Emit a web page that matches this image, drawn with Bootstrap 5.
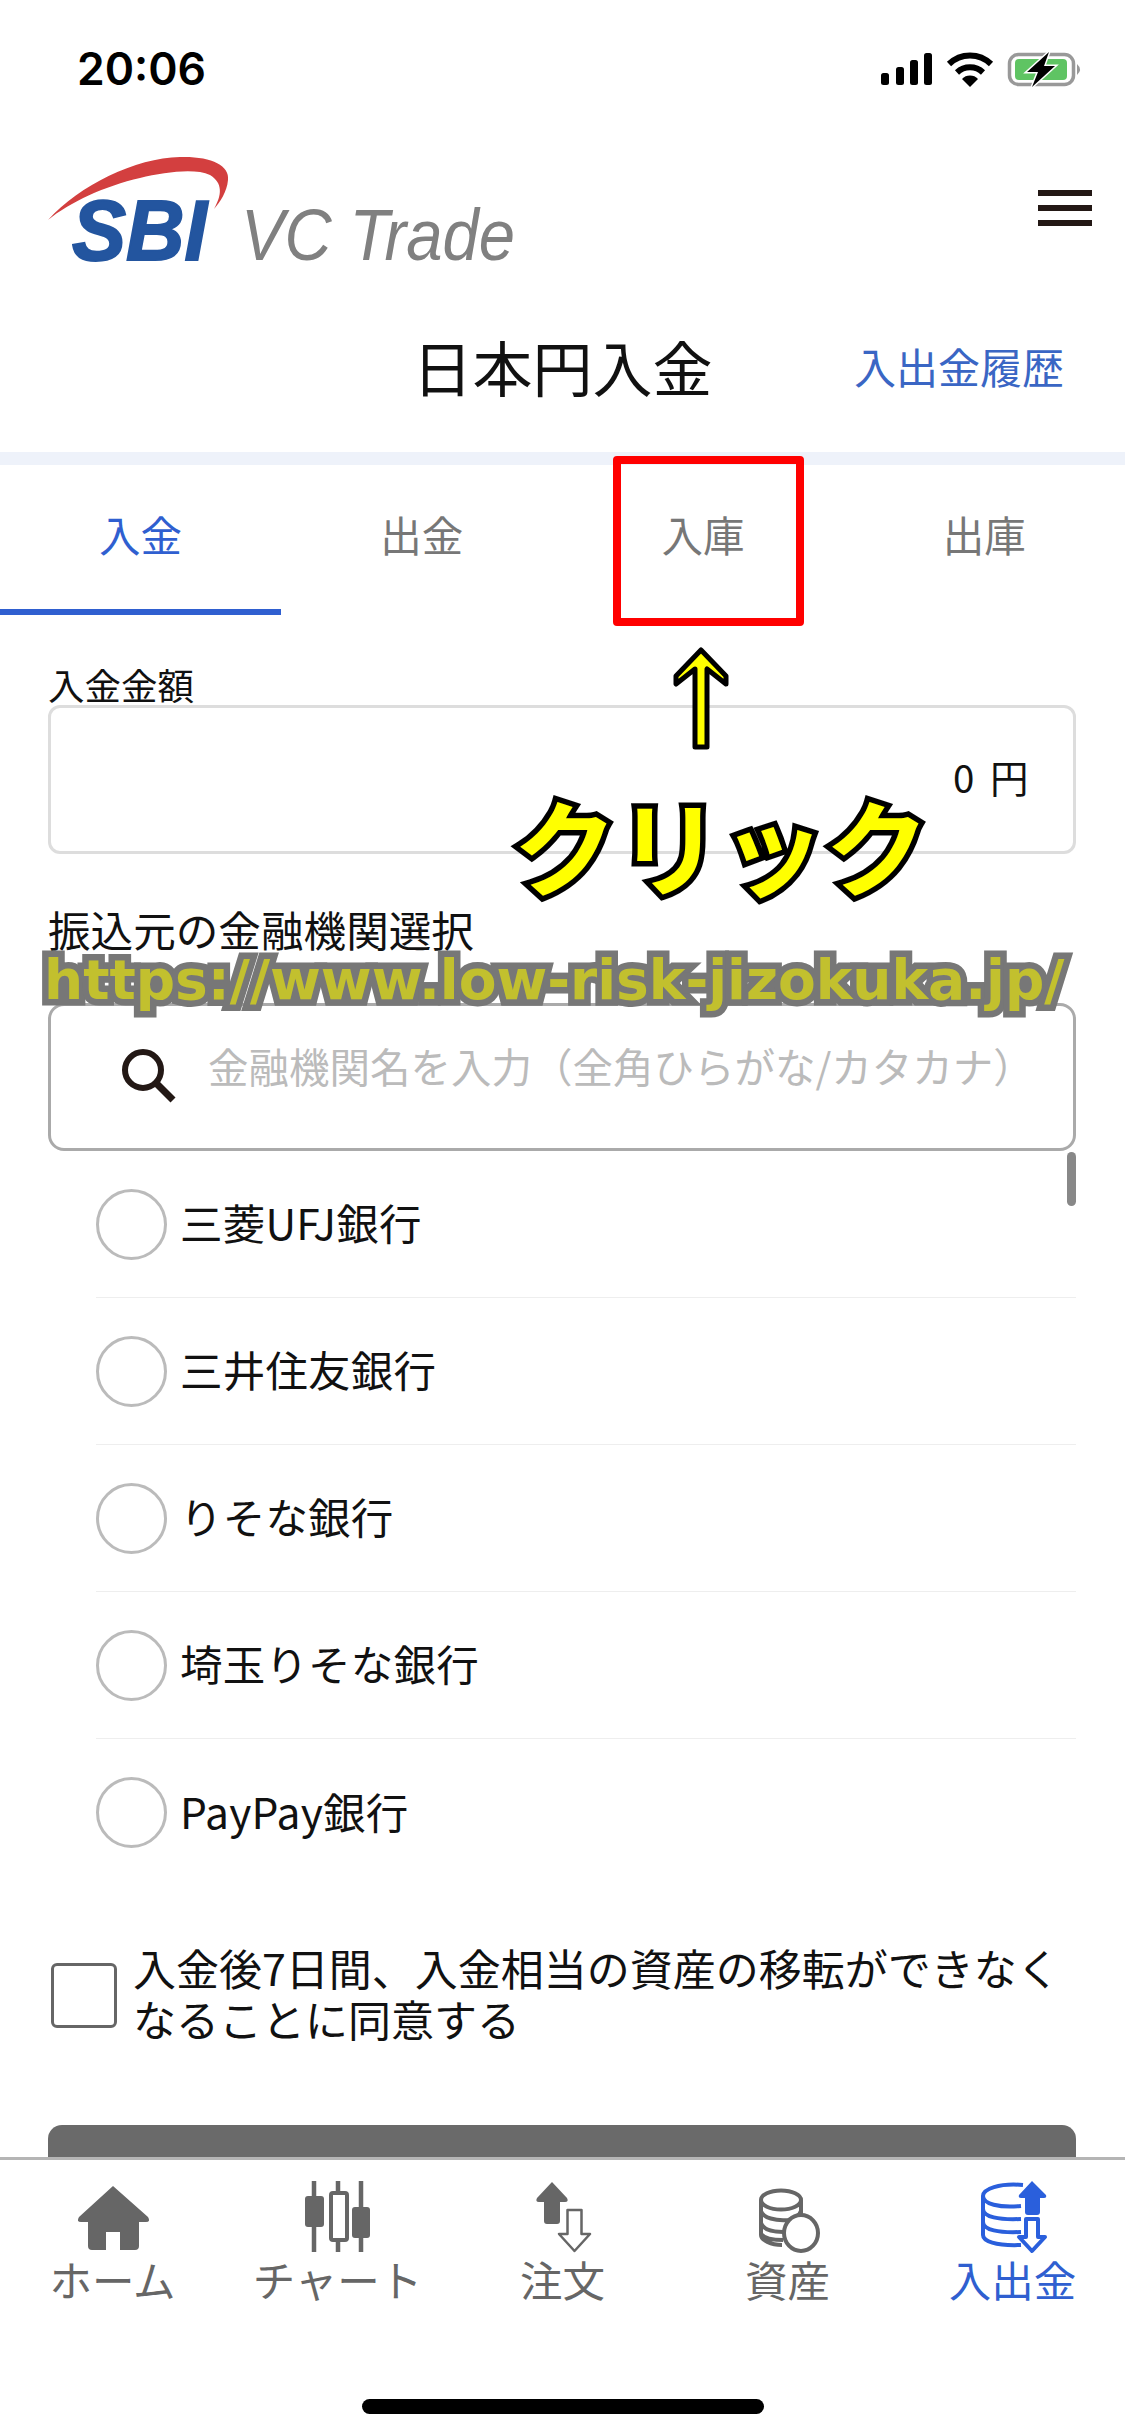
<!DOCTYPE html>
<html lang="ja">
<head>
  <meta charset="UTF-8" />
  <meta name="viewport" content="width=device-width, initial-scale=1.0" />
  <title>日本円入金</title>
  <link href="https://cdn.jsdelivr.net/npm/bootstrap@5.3.0/dist/css/bootstrap.min.css" rel="stylesheet" />
  <style>
    html, body { margin: 0; background: #fff; }
    body {
      font-family: "Noto Sans CJK JP", "Liberation Sans", sans-serif;
      color: #111;
    }
    .phone { width: 1125px; height: 2436px; position: relative; overflow: hidden; }
    .status-row { height: 120px; padding: 39px 42px 0 77px; }
    .status-time { font: 600 44.5px/60px Inter, sans-serif; color: #000; }
    .status-icons { margin-top: 11px; }
    .logo-row { height: 150px; padding: 30px 33px 0 40px; }
    .logo-svg { overflow: visible; }
    .burger { width: 54px; margin-top: 40px; }
    .burger span { display: block; height: 6px; background: #231815; margin-bottom: 9px; }
    .title-row {
      height: 182px;
      display: grid;
      grid-template-columns: 1fr auto 1fr;
      align-items: center;
    }
    .page-title { font-size: 60px; line-height: 1.2; font-weight: 400; margin: 10px 0 0; }
    .history-link { font-size: 42px; color: #3a66c4; text-decoration: none; justify-self: end; margin: 8px 61px 0 0; }
    .band { height: 13px; background: #eef2fa; }
    .tab-row { height: 150px; }
    .tab-row .nav-link {
      height: 150px;
      padding: 40px 0 0;
      font-size: 41.5px;
      line-height: 58px;
      color: #777;
    }
    .tab-row .nav-link.active { color: #2f5fd0; border-bottom: 6px solid #2f5fd0; }
    .form-area { padding: 0 49px 0 48px; position: relative; }
    .field-label { display: block; margin: 0; }
    .label-amount { font-size: 36.5px; line-height: 40px; padding-top: 50px; height: 90px; }
    .amount-box {
      height: 149px;
      border: 3px solid #ddd;
      border-radius: 12px;
      padding: 0 41px 6px 0;
      font-size: 38.5px;
      letter-spacing: 3.5px;
    }
    .label-bank { font-size: 42.6px; line-height: 50px; padding-top: 50px; height: 149px; }
    .search-box { height: 148px; border: 3px solid #aaa; border-radius: 16px; padding-left: 70px; gap: 29px; }
    .search-box input {
      border: 0;
      padding: 0 0 21px;
      font-size: 40.5px;
      color: #111;
      background: transparent;
      box-shadow: none;
    }
    .search-box input::placeholder { color: #bbb; opacity: 1; }
    .bank-list { padding-left: 48px; position: relative; }
    .bank-list .list-group-item {
      height: 147px;
      padding: 0 0 4px;
      gap: 13px;
      font-size: 42.5px;
      letter-spacing: .2px;
      border-color: #eee;
      color: #111;
    }
    .bank-list .list-group-item:last-child { border-bottom: 0; }
    .bank-radio.form-check-input {
      width: 71px;
      height: 71px;
      margin: 4px 0 0;
      border: 3px solid #bbb;
      flex: none;
    }
    .scroll-thumb {
      position: absolute;
      right: 0;
      top: 1px;
      width: 9px;
      height: 54px;
      border-radius: 5px;
      background: #888;
    }
    .agree-row { margin-top: 60px; padding-left: 3px; gap: 16px; height: 179px; }
    .agree-box.form-check-input {
      width: 66px;
      height: 65px;
      margin: 17px 0 0;
      border: 3px solid #666;
      border-radius: 6px;
      flex: none;
    }
    .agree-text { font-size: 43px; line-height: 51px; margin: -4px 0 0; }
    .submit-bar { height: 40px; background: #6a6a6a; border-radius: 14px 14px 0 0; }
    .tabbar {
      position: absolute;
      left: 0;
      right: 0;
      top: 2157px;
      height: 279px;
      background: #fff;
      border-top: 3px solid #b5b5b5;
    }
    .tabbar-cell { width: 225px; padding-top: 21px; color: #666; font-size: 42.5px; line-height: 48px; }
    .tabbar-cell svg { display: block; }
    .tabbar-cell.is-current { color: #2f5fd0; }
    .home-line {
      position: absolute;
      left: 362px;
      top: 2399px;
      width: 402px;
      height: 15px;
      border-radius: 8px;
      background: #000;
    }
    /* annotations drawn over the app screen */
    .mark-red {
      position: absolute;
      left: 613px;
      top: 456px;
      width: 191px;
      height: 170px;
      border: 8px solid #f00;
      border-radius: 4px;
    }
    .mark-arrow { position: absolute; left: 672px; top: 645px; }
    .mark-click {
      position: absolute;
      left: 513px;
      top: 774px;
      font-size: 104px;
      line-height: 140px;
      font-weight: 700;
      color: #ff0;
      -webkit-text-stroke: 11px #000;
      paint-order: stroke fill;
      white-space: nowrap;
    }
    .mark-url {
      position: absolute;
      left: 44px;
      top: 945px;
      font: 700 55px/70px "DejaVu Sans", sans-serif;
      color: #c2c02e;
      -webkit-text-stroke: 13px #777;
      paint-order: stroke fill;
      white-space: nowrap;
    }
  </style>
</head>
<body>
  <div class="phone">
    <div class="status-row d-flex justify-content-between align-items-start">
      <span class="status-time">20:06</span>
      <svg class="status-icons" width="202" height="40" viewBox="0 0 202 40">
        <rect x="0" y="23" width="8" height="12" rx="2.5" fill="#000"/>
        <rect x="15" y="17" width="8" height="18" rx="2.5" fill="#000"/>
        <rect x="29" y="10" width="8" height="25" rx="2.5" fill="#000"/>
        <rect x="43" y="3" width="8" height="32" rx="2.5" fill="#000"/>
        <path d="M68 14A30 30 0 0 1 110 14M76 22.500A19 19 0 0 1 102 22.500" fill="none" stroke="#000" stroke-width="6"/>
        <path d="M81 29A11 11 0 0 1 97 29L89 37Z" fill="#000"/>
        <rect x="128.500" y="4.500" width="64" height="30" rx="9" fill="none" stroke="#999" stroke-width="3.500"/>
        <rect x="134" y="9" width="52" height="21" rx="4" fill="#5fc463"/>
        <path d="M196 14q6 5.500 0 11z" fill="#999"/>
        <path d="M168 2L146 22H157L151 37L174 16H163Z" fill="#000" stroke="#fff" stroke-width="3" paint-order="stroke"/>
      </svg>
    </div>

    <div class="logo-row d-flex justify-content-between align-items-start">
      <svg class="logo-svg" width="480" height="140" viewBox="0 0 480 140" aria-label="SBI VC Trade">
        <path d="M8 70C40 35 95 8 140 7C170 6 190 15 188 30C187 42 180 52 174 59C182 45 183 33 170 25C155 18 125 22 100 28C65 36 30 52 8 70Z" fill="#d33f3f"/>
        <text x="32" y="110" font-family="Liberation Sans" font-size="86" font-weight="700" font-style="italic" fill="#23559f" stroke="#23559f" stroke-width="2" textLength="135" lengthAdjust="spacingAndGlyphs">SBI</text>
        <text x="201" y="110" font-family="Liberation Sans" font-size="72" font-style="italic" fill="#808080" textLength="274" lengthAdjust="spacingAndGlyphs">VC Trade</text>
      </svg>
      <div class="burger"><span></span><span></span><span></span></div>
    </div>

    <div class="title-row">
      <span></span>
      <h1 class="page-title">日本円入金</h1>
      <a class="history-link" href="#">入出金履歴</a>
    </div>

    <div class="band"></div>

    <ul class="nav nav-fill tab-row">
      <li class="nav-item"><a class="nav-link active" href="#">入金</a></li>
      <li class="nav-item"><a class="nav-link" href="#">出金</a></li>
      <li class="nav-item"><a class="nav-link" href="#">入庫</a></li>
      <li class="nav-item"><a class="nav-link" href="#">出庫</a></li>
    </ul>

    <div class="form-area">
      <label class="field-label label-amount">入金金額</label>
      <div class="amount-box d-flex justify-content-end align-items-center">0 円</div>

      <label class="field-label label-bank">振込元の金融機関選択</label>
      <div class="search-box d-flex align-items-center">
        <svg width="58" height="58" viewBox="0 0 58 58" class="flex-shrink-0">
          <circle cx="22" cy="22" r="18" fill="none" stroke="#231815" stroke-width="6"/>
          <path d="M35 35L52 52" stroke="#231815" stroke-width="7"/>
        </svg>
        <input class="form-control" type="text" placeholder="金融機関名を入力（全角ひらがな/カタカナ）">
      </div>

      <div class="bank-list">
        <ul class="list-group list-group-flush">
          <li class="list-group-item d-flex align-items-center"><input class="form-check-input bank-radio" type="radio" name="bank">三菱UFJ銀行</li>
          <li class="list-group-item d-flex align-items-center"><input class="form-check-input bank-radio" type="radio" name="bank">三井住友銀行</li>
          <li class="list-group-item d-flex align-items-center"><input class="form-check-input bank-radio" type="radio" name="bank">りそな銀行</li>
          <li class="list-group-item d-flex align-items-center"><input class="form-check-input bank-radio" type="radio" name="bank">埼玉りそな銀行</li>
          <li class="list-group-item d-flex align-items-center"><input class="form-check-input bank-radio" type="radio" name="bank">PayPay銀行</li>
        </ul>
        <div class="scroll-thumb"></div>
      </div>

      <div class="agree-row d-flex align-items-start">
        <input class="form-check-input agree-box" type="checkbox">
        <p class="agree-text">入金後7日間、入金相当の資産の移転ができなくなることに同意する</p>
      </div>

      <div class="submit-bar"></div>
    </div>

    <div class="tabbar d-flex">
      <div class="tabbar-cell d-flex flex-column align-items-center">
        <svg width="100" height="74" viewBox="0 0 100 74"><path d="M50 5L85 36Q88 41 83 41H76V65Q76 69 72 69H57V51H43V69H29Q25 69 25 65V41H18Q13 41 16 36Z" fill="#666"/></svg>
        ホーム
      </div>
      <div class="tabbar-cell d-flex flex-column align-items-center">
        <svg width="100" height="74" viewBox="0 0 100 74">
          <path d="M26 0V71M50 0V71M73 0V71" stroke="#666" stroke-width="4.500"/>
          <rect x="17" y="15" width="19" height="31" rx="3" fill="#666"/>
          <rect x="43" y="12" width="16" height="47" rx="2" fill="#fff" stroke="#666" stroke-width="4"/>
          <rect x="64" y="26" width="18" height="31" rx="3" fill="#666"/>
        </svg>
        チャート
      </div>
      <div class="tabbar-cell d-flex flex-column align-items-center">
        <svg width="100" height="74" viewBox="0 0 100 74">
          <path d="M39 1L54 17Q56 21 52 21H47V40Q47 43 44 43H34Q31 43 31 40V21H26Q22 21 24 17Z" fill="#666"/>
          <path d="M54.500 29H68.500V53H77L61.500 70L46 53H54.500Z" fill="#fff" stroke="#666" stroke-width="2.500" stroke-linejoin="round"/>
        </svg>
        注文
      </div>
      <div class="tabbar-cell d-flex flex-column align-items-center">
        <svg width="100" height="74" viewBox="0 0 100 74" fill="none" stroke="#666" stroke-width="4">
          <ellipse cx="43" cy="19" rx="20" ry="9.500"/>
          <path d="M23 19V54C23 59 33 64 44 64M63 19V40M23 30C25 37 38 40 50 39C56 38 61 36 63 30M23 42C25 48 33 51 45 51M23 53C26 57 33 59 45 59"/>
          <ellipse cx="63" cy="52" rx="17" ry="18" fill="#fff"/>
        </svg>
        資産
      </div>
      <div class="tabbar-cell is-current d-flex flex-column align-items-center">
        <svg width="100" height="74" viewBox="0 0 100 74" fill="none" stroke="#2a5fdc" stroke-width="4">
          <path d="M60 4C36 2 20 8 20 15V54C20 60 32 65 58 64"/>
          <path d="M20 15C20 23 36 27 58 25M20 28C20 36 36 39 58 38M20 41C20 49 36 52 58 51"/>
          <path d="M69 0L83 14Q84 17 81 17H77V31Q77 34 74 34H65Q62 34 62 31V17H58Q55 17 56 14Z" fill="#2a5fdc" stroke="none"/>
          <path d="M63 38H75V56H82L69 70L56 56H63Z" fill="#fff" stroke-linejoin="round"/>
        </svg>
        入出金
      </div>
    </div>
    <div class="home-line"></div>

    <div class="mark-red"></div>
    <svg class="mark-arrow" width="58" height="107" viewBox="0 0 58 107">
      <path d="M29 5L54 31V39L35 24V102H23V24L4 39V31Z" fill="#ff0" stroke="#000" stroke-width="5" stroke-linejoin="round"/>
    </svg>
    <div class="mark-click">クリック</div>
    <div class="mark-url">https://www.low-risk-jizokuka.jp/</div>
  </div>
</body>
</html>
